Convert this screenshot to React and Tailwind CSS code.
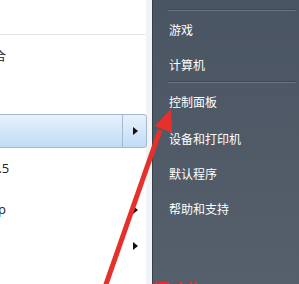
const rightItems = [
  { label: '游戏', h: 'h-[38px]' },
  { label: '计算机', h: 'h-[32px]', sep: true },
  { label: '控制面板', h: 'h-[38px]' },
  { label: '设备和打印机', h: 'h-[35px]' },
  { label: '默认程序', h: 'h-[35px]' },
  { label: '帮助和支持', h: 'h-[35px]' },
]

function Caret() {
  return (
    <svg width="5" height="8" viewBox="0 0 5 8" className="block">
      <path d="M0 0 L5 4 L0 8 Z" fill="#111" />
    </svg>
  )
}

function Separator() {
  return (
    <div className="ml-[15px] mr-[3px] flex flex-col">
      <div className="h-px bg-[#3c4550]" />
      <div className="h-px bg-[#6d7784] rounded-r" />
    </div>
  )
}

export default function App() {
  return (
    <div
      className="relative w-[299px] h-[284px] overflow-hidden flex"
      style={{ fontFamily: '"Noto Sans CJK SC", "Noto Sans", sans-serif' }}
    >
      {/* Programs list */}
      <div className="w-[152px] shrink-0 bg-white flex flex-col shadow-[inset_-6px_0_0_#f1f3f6]">
        <div className="h-[34px]" />
        <div className="h-px w-[145px] bg-[#dde3e9]" />
        <div className="h-[42px] flex items-center overflow-hidden">
          <span className="-ml-[18px] text-[12px] text-[#222]">组合</span>
        </div>
        <div className="h-[37px]" />
        <div className="h-[34px] w-[149px] -ml-[2px] flex border border-[#a3b8cd] rounded-r-[3px] bg-gradient-to-b from-[#e6f1fd] to-[#c2dcf6]">
          <div className="flex-1" />
          <div className="w-[24px] border-l border-[#a7bbd0] flex items-center justify-center pl-[1px]">
            <Caret />
          </div>
        </div>
        <div className="h-[42px] flex items-center overflow-hidden">
          <span
            className="-ml-[9px] text-[13px] text-[#222]"
            style={{ fontFamily: '"Open Sans", "Liberation Sans", sans-serif' }}
          >
            1.5
          </span>
        </div>
        <div className="h-[40px] flex items-center justify-between overflow-hidden pr-[14px]">
          <span
            className="-ml-[2px] text-[13px] text-[#222]"
            style={{ fontFamily: '"Open Sans", "Liberation Sans", sans-serif' }}
          >
            p
          </span>
          <Caret />
        </div>
        <div className="h-[32px] flex items-center justify-end pr-[14px]">
          <Caret />
        </div>
      </div>

      {/* Right column */}
      <div className="flex-1 border-l border-[#363f4a] bg-gradient-to-b from-[#4a5563] to-[#56606c] flex flex-col">
        <div className="h-[9px]" />
        <Separator />
        {rightItems.map((item) => (
          <div key={item.label} className="flex flex-col">
            <div className={`${item.h} flex items-center pl-[16px] text-[12px] text-white`}>
              {item.label}
            </div>
            {item.sep && <Separator />}
          </div>
        ))}
      </div>

      {/* Red annotation arrow */}
      <svg className="absolute inset-0 pointer-events-none" width="299" height="284" viewBox="0 0 299 284">
        <line x1="104" y1="290" x2="160" y2="130" stroke="#e5302c" strokeWidth="5" />
        <polygon points="171,109 172,133 155,126" fill="#e5302c" />
      </svg>

      {/* Watermark, cut off at the bottom */}
      <div
        className="absolute left-[100px] top-[280px] text-[17px] font-bold whitespace-nowrap leading-none"
        style={{ fontFamily: '"Liberation Sans", sans-serif' }}
      >
        <span className="text-[#b0302c]">www.</span>
        <span className="text-[#e2302a]">xiTohjia.com</span>
      </div>
    </div>
  )
}
